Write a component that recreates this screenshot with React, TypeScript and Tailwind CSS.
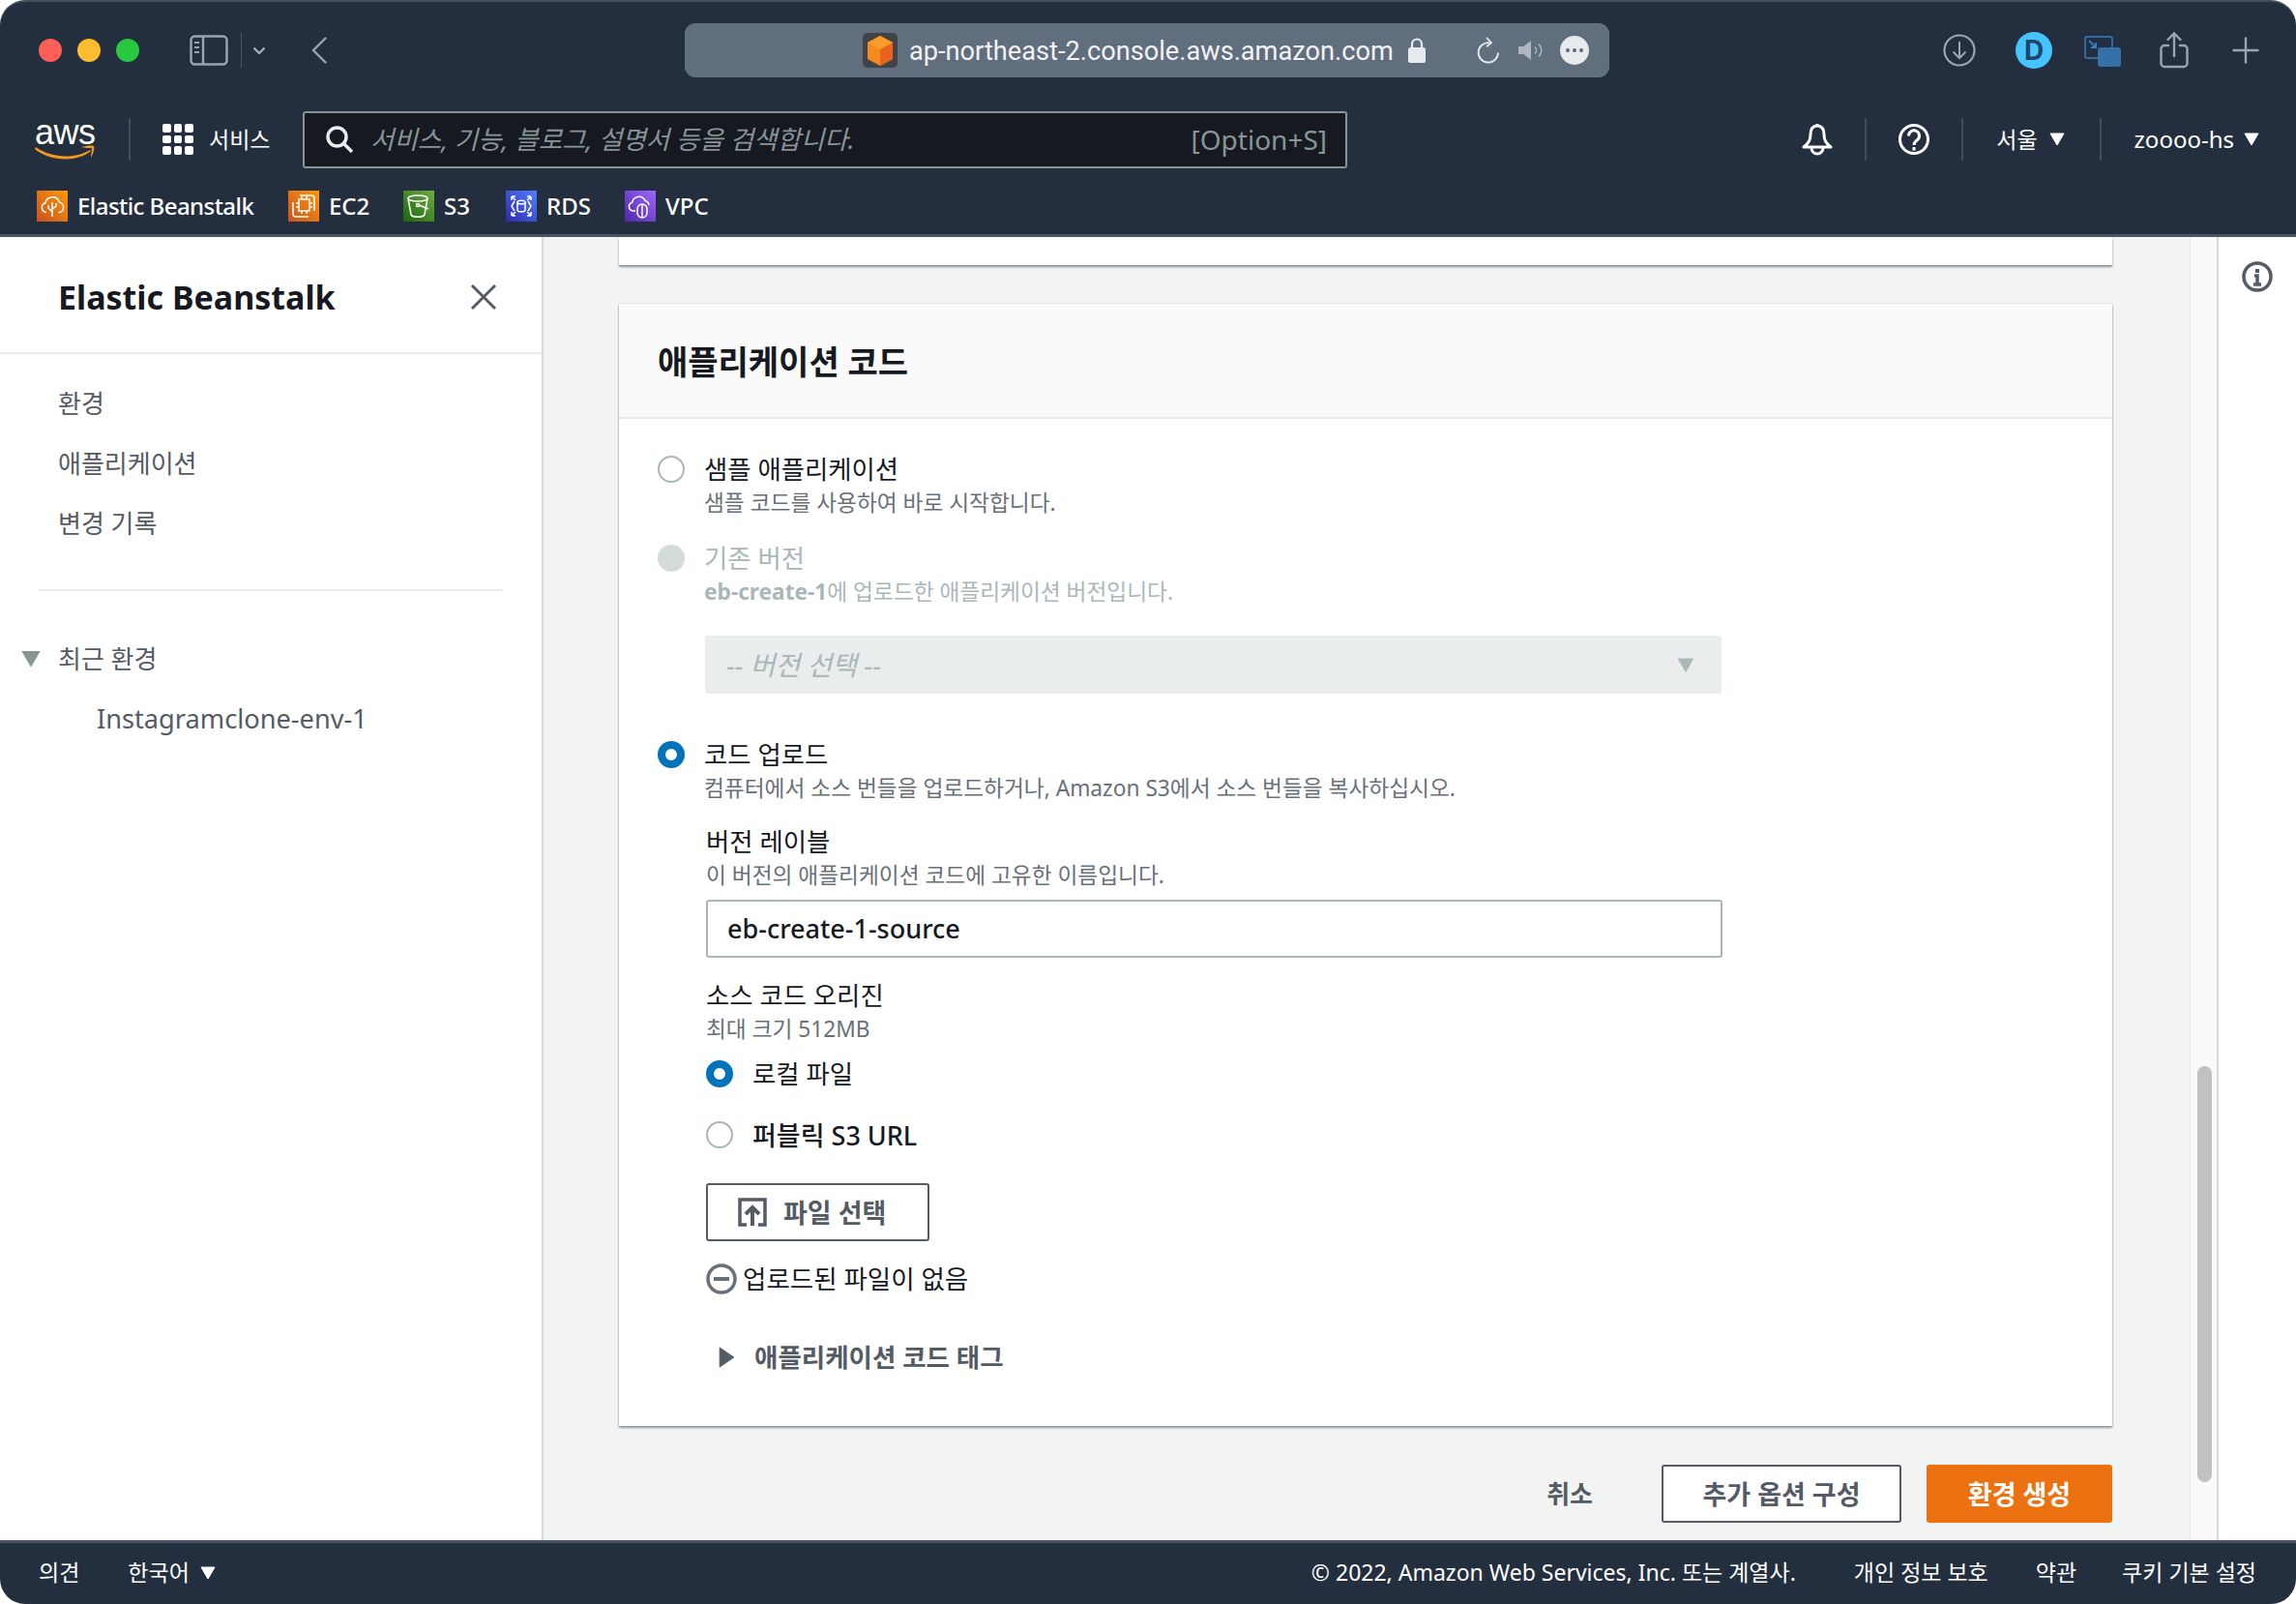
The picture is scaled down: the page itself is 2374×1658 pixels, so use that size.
import type { ReactNode } from 'react';

const FONT = 'font-["Noto_Sans","Noto_Sans_CJK_KR",sans-serif]';

function Divider() {
  return <div className="w-[2px] h-[44px] bg-[#414c5a] shrink-0" />;
}

function Tri({ className }: { className: string }) {
  return (
    <svg viewBox="0 0 16 14" className={className} fill="currentColor">
      <path d="M1 1h14L8 13z" strokeLinejoin="round" stroke="currentColor" />
    </svg>
  );
}

function Radio({ state }: { state: 'off' | 'on' | 'disabled' }) {
  if (state === 'on') {
    return <div className="w-[28px] h-[28px] rounded-full border-[8px] border-[#0073bb] bg-white shrink-0" />;
  }
  if (state === 'disabled') {
    return <div className="w-[28px] h-[28px] rounded-full bg-[#d5dbdb] shrink-0" />;
  }
  return <div className="w-[28px] h-[28px] rounded-full border-2 border-[#aab7b8] bg-white shrink-0" />;
}

function TrafficLights() {
  return (
    <div className="flex gap-[16px] items-center w-[144px] shrink-0">
      <div className="w-[24px] h-[24px] rounded-full bg-[#ff5f57]" />
      <div className="w-[24px] h-[24px] rounded-full bg-[#febc2e]" />
      <div className="w-[24px] h-[24px] rounded-full bg-[#28c840]" />
    </div>
  );
}

function TitleBar() {
  return (
    <div className="h-[106px] pl-[40px] pr-[38px] pt-[21px] flex items-start">
      <div className="h-[58px] flex items-center">
        <TrafficLights />
        <svg viewBox="0 0 40 32" className="w-[40px] h-[32px] ml-[12px] text-[#9aa5b4]" fill="none" stroke="currentColor" strokeWidth="2.4">
          <rect x="1.5" y="1.5" width="37" height="29" rx="4" />
          <path d="M14 2v28" />
          <path d="M5 8h5M5 13h5M5 18h5" strokeWidth="2" />
        </svg>
        <div className="w-[1px] h-[36px] bg-[#4a5565] ml-[13px]" />
        <svg viewBox="0 0 14 9" className="w-[14px] h-[9px] ml-[11px] text-[#a8b2bf]" fill="none" stroke="currentColor" strokeWidth="2.2">
          <path d="M1.5 1.5 7 7l5.5-5.500" />
        </svg>
        <svg viewBox="0 0 16 28" className="w-[16px] h-[28px] ml-[47px] text-[#9aa5b4]" fill="none" stroke="currentColor" strokeWidth="2.4" strokeLinecap="round">
          <path d="M14.5 1.5 2 14l12.5 12.5" />
        </svg>
      </div>
      <div className="ml-[370px] w-[956px] h-[56px] mt-[1px] rounded-[11px] bg-[#616e7e] flex items-center pl-[184px]">
        <svg viewBox="0 0 36 36" className="w-[36px] h-[36px] shrink-0">
          <rect width="36" height="36" rx="5" fill="#414346" />
          <path d="M18 3 31 10v17l-13 7-13-7V10z" fill="#f58a1f" />
          <path d="M18 17l13-7v17l-13 7z" fill="#e8641e" />
          <path d="M18 3 31 10l-13 7-13-7z" fill="#fb9b2a" />
        </svg>
        <span className="ml-[12px] w-[500px] pt-[3px] text-[27.200px] leading-none text-[#f1f3f5] font-['Roboto',sans-serif] whitespace-nowrap">
          ap-northeast-2.console.aws.amazon.com
        </span>
        <svg viewBox="0 0 20 28" className="w-[20px] h-[28px] ml-[15px] shrink-0">
          <path d="M5 12V7.5a5 5 0 0 1 10 0V12" fill="none" stroke="#e8eaed" strokeWidth="2.2" />
          <rect x="1" y="11" width="18" height="16" rx="2.5" fill="#e8eaed" />
        </svg>
        <svg viewBox="0 0 26 28" className="w-[26px] h-[28px] ml-[51px] shrink-0" fill="none" stroke="#e8eaed" strokeWidth="1.8">
          <path d="M14 6.2A10.2 10.2 0 1 0 23 16.400" />
          <path d="M11 1l5 5.200-5 4" />
        </svg>
        <svg viewBox="0 0 28 22" className="w-[28px] h-[22px] ml-[17px] shrink-0">
          <path d="M1 7h5l8-6v20l-8-6H1z" fill="#aeb6c0" />
          <path d="M18 7.500a5 5 0 0 1 0 7M22 4.500a9 9 0 0 1 0 13" fill="none" stroke="#aeb6c0" strokeWidth="1.6" />
        </svg>
        <div className="w-[30px] h-[30px] rounded-full bg-[#e8eaed] ml-[16px] flex items-center justify-center gap-[2.500px] shrink-0">
          <div className="w-[4.500px] h-[4.500px] rounded-full bg-[#5d6878]" />
          <div className="w-[4.500px] h-[4.500px] rounded-full bg-[#5d6878]" />
          <div className="w-[4.500px] h-[4.500px] rounded-full bg-[#5d6878]" />
        </div>
      </div>
      <div className="flex-1" />
      <div className="h-[58px] flex items-center">
        <svg viewBox="0 0 34 34" className="w-[34px] h-[34px] text-[#9aa5b4]" fill="none" stroke="currentColor" strokeWidth="2.200">
          <circle cx="17" cy="17" r="15.500" />
          <path d="M17 8v17M10.500 18.500 17 25l6.500-6.500" strokeWidth="2" />
        </svg>
        <div className="w-[38px] h-[38px] ml-[41px] rounded-full bg-[#45c4ff] flex items-center justify-center text-[28px] font-bold text-[#20456b] leading-none font-['Inter',sans-serif]">
          D
        </div>
        <svg viewBox="0 0 38 32" className="w-[38px] h-[32px] ml-[33px] mt-[2px]">
          <rect x="1" y="1" width="28" height="22" rx="2" fill="none" stroke="#2f6ba3" strokeWidth="2" />
          <path d="M5 5l7 7M12 7v5H7" fill="none" stroke="#3b7db9" strokeWidth="2" />
          <rect x="14" y="12" width="24" height="20" rx="3" fill="#3570a8" />
        </svg>
        <svg viewBox="0 0 30 38" className="w-[30px] h-[38px] ml-[40px] text-[#9aa5b4]" fill="none" stroke="currentColor" strokeWidth="2.400" strokeLinecap="round">
          <path d="M9 14H5a3.500 3.500 0 0 0-3.500 3.500v15A3.500 3.500 0 0 0 5 36h20a3.500 3.500 0 0 0 3.500-3.500v-15A3.500 3.500 0 0 0 25 14h-4" />
          <path d="M15 25V2M8.500 8 15 1.500 21.500 8" />
        </svg>
        <svg viewBox="0 0 28 28" className="w-[28px] h-[28px] ml-[45px] text-[#9aa5b4]" fill="none" stroke="currentColor" strokeWidth="2.400" strokeLinecap="round">
          <path d="M14 1.500v25M1.500 14h25" />
        </svg>
      </div>
    </div>
  );
}

function NavBar() {
  return (
    <div className="h-[72px] pl-[36px] pr-[38px] flex items-center">
      <div className="relative w-[62px] h-[44px] shrink-0">
        <span className={`block text-[36px] leading-[30px] text-white tracking-[-0.5px] font-["Liberation_Sans",sans-serif]`}>aws</span>
        <svg viewBox="0 0 62 16" className="absolute left-0 top-[28px] w-[62px] h-[16px]" fill="#f7981d">
          <path d="M1 2c15 11 40 13 56 3l1 1C44 18 15 17 0 4z" />
          <path d="M48 2c4-1 10-2 13-1 1 3-1 9-3 12 0-3 1-7 1-10-3 0-7 0-11-1z" />
        </svg>
      </div>
      <div className="ml-[35px]"><Divider /></div>
      <div className="ml-[33px] grid grid-cols-3 gap-[3px] w-[32px] h-[32px] shrink-0">
        {Array.from({ length: 9 }).map((_, i) => (
          <div key={i} className="bg-white rounded-[2px]" />
        ))}
      </div>
      <span className="ml-[16px] w-[62px] text-[23px] text-white whitespace-nowrap leading-none">서비스</span>
      <div className="ml-[35px] w-[1080px] h-[59px] bg-[#16191f] border-2 border-[#879596] rounded-[3px] flex items-center pl-[22px] pr-[19px]">
        <svg viewBox="0 0 28 28" className="w-[28px] h-[28px] shrink-0" fill="none" stroke="#eaeded" strokeWidth="3.400">
          <circle cx="11.500" cy="11.500" r="9.500" />
          <path d="M18.500 18.500 27 27" />
        </svg>
        <span className="ml-[18px] italic text-[26.500px] text-[#879596] whitespace-nowrap leading-none">
          서비스, 기능, 블로그, 설명서 등을 검색합니다.
        </span>
        <div className="flex-1" />
        <span className="text-[28px] text-[#879596] leading-none whitespace-nowrap">[Option+S]</span>
      </div>
      <div className="flex-1" />
      <svg viewBox="0 0 32 34" className="w-[32px] h-[34px] text-white shrink-0" fill="none" stroke="currentColor" strokeWidth="3" strokeLinejoin="round">
        <path d="M16 3c-5 0-7 4-7 9 0 6-2 9-7 13h28c-5-4-7-7-7-13 0-5-2-9-7-9zM16 1v2" />
        <path d="M10 26a6 6 0 0 0 12 0" />
      </svg>
      <div className="ml-[33px]"><Divider /></div>
      <svg viewBox="0 0 32 32" className="w-[32px] h-[32px] ml-[33px] shrink-0" fill="none" stroke="#fff" strokeWidth="3">
        <circle cx="16" cy="16" r="14.500" />
        <path d="M10.500 12.500a5.500 5.500 0 1 1 8.500 4.500c-2 1.500-3 2.500-3 5" />
        <path d="M16 24v3.500" />
      </svg>
      <div className="ml-[33px]"><Divider /></div>
      <span className="ml-[34px] text-[23px] text-white leading-none whitespace-nowrap">서울</span>
      <Tri className="ml-[12px] w-[16px] h-[14px] text-white shrink-0" />
      <div className="ml-[36px]"><Divider /></div>
      <span className="ml-[34px] text-[24px] text-white leading-none whitespace-nowrap">zoooo-hs</span>
      <Tri className="ml-[10px] w-[16px] h-[14px] text-white shrink-0" />
    </div>
  );
}

function Shortcut({ label, bg, children, className, labelClass }: { label: string; bg: string; children: ReactNode; className: string; labelClass?: string }) {
  return (
    <div className={`flex items-center ${className}`}>
      <div className={`w-[32px] h-[32px] shrink-0 ${bg}`}>
        <svg viewBox="0 0 32 32" className="w-[32px] h-[32px]" fill="none" stroke="#fff" strokeWidth="1.500">
          {children}
        </svg>
      </div>
      <span className={`ml-[10px] text-[24px] leading-none text-white font-medium whitespace-nowrap ${labelClass ?? ''}`}>{label}</span>
    </div>
  );
}

function Shortcuts() {
  return (
    <div className="h-[62px] pl-[38px] pt-[4px] flex items-center">
      <Shortcut label="Elastic Beanstalk" labelClass="tracking-[-0.55px]" bg="bg-linear-to-tr from-[#c8511b] to-[#ff9900]" className="w-[260px]">
        <path d="M10 22.500a5 5 0 0 1-1-9.800 7.500 7.500 0 0 1 14.500-.5 5.200 5.200 0 0 1-1 10.300" />
        <path d="M16 27V12M16 22l-4-4v-3M16 19l4-3v-3" />
      </Shortcut>
      <Shortcut label="EC2" bg="bg-linear-to-tr from-[#c8511b] to-[#ff9900]" className="w-[119px]">
        <rect x="11" y="9" width="11" height="12" />
        <path d="M12 5h12a3 3 0 0 1 3 3v13M21 27H8a3 3 0 0 1-3-3V12M14 6v3M19 6v3M14 21v3M19 21v3M8 13h3M8 17h3M22 13h3M22 17h3" />
      </Shortcut>
      <Shortcut label="S3" bg="bg-linear-to-tr from-[#1b660f] to-[#6cae3e]" className="w-[106px]">
        <ellipse cx="15" cy="8" rx="10" ry="3" />
        <path d="M5 8l3 17c2 3 12 3 14 0l3-17" />
        <circle cx="15" cy="15" r="1.500" />
        <path d="M16 15l10 4" />
      </Shortcut>
      <Shortcut label="RDS" bg="bg-linear-to-tr from-[#2e27ad] to-[#527fff]" className="w-[123px]">
        <ellipse cx="16" cy="12" rx="4" ry="1.800" />
        <path d="M12 12v8c0 2.400 8 2.400 8 0v-8M9 11l-3 5 3 5M23 11l3 5-3 5" />
        <path d="M6 6l4 4M6 6v4M6 6h4M26 6l-4 4M26 6v4M26 6h-4M6 26l4-4M6 26v-4M6 26h4M26 26l-4-4M26 26v-4M26 26h-4" />
      </Shortcut>
      <Shortcut label="VPC" bg="bg-linear-to-tr from-[#4d27a8] to-[#a166ff]" className="">
        <path d="M11 21H8.500a4.500 4.500 0 0 1-.8-8.800A7 7 0 0 1 21 10.500a5 5 0 0 1 4 4.500" />
        <rect x="13" y="14" width="10" height="14" rx="5" />
        <path d="M18 14v14" />
      </Shortcut>
    </div>
  );
}

function Sidebar() {
  return (
    <aside className="w-[562px] shrink-0 bg-white border-r-2 border-[#d5dbdb] flex flex-col">
      <div className="h-[121px] pl-[60px] pr-[46px] flex items-center justify-between border-b-2 border-[#eaeded] pt-[5px]">
        <span className="text-[34px] font-bold text-[#16191f] leading-none whitespace-nowrap">Elastic Beanstalk</span>
        <svg viewBox="0 0 28 28" className="w-[28px] h-[28px]" fill="none" stroke="#545b64" strokeWidth="3">
          <path d="M2 2l24 24M26 2 2 26" />
        </svg>
      </div>
      <nav className="flex flex-col gap-[26px] pl-[60px] pt-[33px] text-[26px] leading-[36px] text-[#545b64]">
        <span>환경</span>
        <span>애플리케이션</span>
        <span>변경 기록</span>
      </nav>
      <div className="h-[2px] bg-[#eaeded] ml-[40px] mr-[40px] mt-[50px]" />
      <div className="flex items-center pl-[22px] mt-[52px] text-[26px] leading-[36px] text-[#545b64]">
        <Tri className="w-[20px] h-[18px] text-[#879596]" />
        <span className="ml-[18px]">최근 환경</span>
      </div>
      <span className="pl-[100px] mt-[26px] text-[27.200px] leading-[36px] text-[#545b64]">Instagramclone-env-1</span>
    </aside>
  );
}

function Option({ state, title, muted, children }: { state: 'off' | 'on' | 'disabled'; title: string; muted?: boolean; children: ReactNode }) {
  return (
    <div className="flex">
      <div className="pt-[4px]"><Radio state={state} /></div>
      <div className="ml-[20px]">
        <div className={`text-[26.400px] leading-[36px] ${muted ? 'text-[#aab7b8]' : 'text-[#16191f]'}`}>{title}</div>
        <div className={`text-[22.700px] leading-[34px] ${muted ? 'text-[#aab7b8]' : 'text-[#687078]'} whitespace-nowrap`}>{children}</div>
      </div>
    </div>
  );
}

function FormCard() {
  return (
    <section className="mt-[40px] bg-white shadow-[0_2px_2px_rgba(0,28,36,0.4),0_0_1px_rgba(0,28,36,0.35)]">
      <div className="h-[119px] bg-[#fafafa] border-b-2 border-[#eaeded] pl-[40px] pt-[3px] flex items-center">
        <h2 className="text-[34px] font-bold text-[#16191f] leading-none">애플리케이션 코드</h2>
      </div>
      <div className="pl-[40px] pt-[34px] h-[1041px]">
        <Option state="off" title="샘플 애플리케이션">샘플 코드를 사용하여 바로 시작합니다.</Option>
        <div className="mt-[22px]">
          <Option state="disabled" title="기존 버전" muted>
            <b className="font-bold">eb-create-1</b>에 업로드한 애플리케이션 버전입니다.
          </Option>
        </div>
        <div className="ml-[49px] mt-[28px] w-[1051px] h-[60px] rounded-[3px] bg-[#eaeded] flex items-center justify-between pl-[22px] pr-[27px]">
          <span className="italic text-[28px] text-[#aab7b8] leading-none">-- 버전 선택 --</span>
          <Tri className="w-[20px] h-[15px] text-[#aab7b8]" />
        </div>
        <div className="mt-[45px]">
          <Option state="on" title="코드 업로드">컴퓨터에서 소스 번들을 업로드하거나, Amazon S3에서 소스 번들을 복사하십시오.</Option>
        </div>
        <div className="ml-[50px]">
          <div className="mt-[20px] text-[26.400px] leading-[36px] text-[#16191f]">버전 레이블</div>
          <div className="text-[22.700px] leading-[34px] text-[#687078]">이 버전의 애플리케이션 코드에 고유한 이름입니다.</div>
          <div className="mt-[8px] w-[1051px] h-[60px] border-2 border-[#aab7b8] rounded-[3px] flex items-center pl-[20px] text-[27px] text-[#16191f] font-medium">
            eb-create-1-source
          </div>
          <div className="mt-[21px] text-[26.400px] leading-[36px] text-[#16191f]">소스 코드 오리진</div>
          <div className="text-[22.700px] leading-[34px] text-[#687078]">최대 크기 512MB</div>
          <div className="mt-[11px] flex items-center h-[36px]">
            <Radio state="on" />
            <span className="ml-[20px] text-[26.400px] text-[#16191f] leading-none">로컬 파일</span>
          </div>
          <div className="mt-[27px] flex items-center h-[36px]">
            <Radio state="off" />
            <span className="ml-[20px] text-[27px] text-[#16191f] leading-none font-medium">퍼블릭 S3 URL</span>
          </div>
          <div className="mt-[32px] w-[231px] h-[60px] border-2 border-[#545b64] rounded-[3px] flex items-center pl-[31px]">
            <svg viewBox="0 0 30 30" className="w-[30px] h-[30px] shrink-0" fill="none" stroke="#545b64" strokeWidth="4">
              <path d="M9 2H2v26h7M21 2h-1M21 2h7v26h-7M2 2h26" strokeWidth="3.500" />
              <path d="M15 29V11M8 17l7-7 7 7" />
            </svg>
            <span className="ml-[17px] text-[27px] font-bold text-[#545b64] leading-none whitespace-nowrap">파일 선택</span>
          </div>
          <div className="mt-[21px] flex items-center h-[36px]">
            <svg viewBox="0 0 32 32" className="w-[32px] h-[32px] shrink-0" fill="none" stroke="#687078" strokeWidth="3.500">
              <circle cx="16" cy="16" r="14" />
              <path d="M8 16h16" strokeWidth="4" />
            </svg>
            <span className="ml-[6px] text-[26.500px] text-[#16191f] leading-none whitespace-nowrap">업로드된 파일이 없음</span>
          </div>
          <div className="mt-[45px] flex items-center h-[36px] pl-[13px]">
            <svg viewBox="0 0 18 24" className="w-[17px] h-[22px] shrink-0" fill="#545b64">
              <path d="M1 1l16 11L1 23z" stroke="#545b64" strokeLinejoin="round" />
            </svg>
            <span className="ml-[20px] text-[26.500px] font-bold text-[#545b64] leading-none whitespace-nowrap">애플리케이션 코드 태그</span>
          </div>
        </div>
      </div>
    </section>
  );
}

function Main() {
  return (
    <main className="flex-1 bg-[#f2f3f3] pl-[78px] pr-[80px]">
      <div className="h-[29px] bg-white shadow-[0_2px_2px_rgba(0,28,36,0.45)]" />
      <FormCard />
      <div className="mt-[40px] flex items-center justify-end">
        <span className="text-[26px] font-bold text-[#545b64] leading-none">취소</span>
        <div className="ml-[71px] w-[248px] h-[60px] bg-white border-2 border-[#545b64] rounded-[3px] flex items-center justify-center text-[27px] font-bold text-[#545b64] leading-none whitespace-nowrap">
          추가 옵션 구성
        </div>
        <div className="ml-[26px] w-[192px] h-[60px] bg-[#ec7211] rounded-[3px] flex items-center justify-center text-[27px] font-bold text-white leading-none whitespace-nowrap">
          환경 생성
        </div>
      </div>
    </main>
  );
}

function Scrollbar() {
  return (
    <div className="w-[28px] shrink-0 bg-[#fafafa] border-l border-[#e8e8e8] pl-[7px] pt-[857px]">
      <div className="w-[15px] h-[430px] rounded-full bg-[#c1c1c1]" />
    </div>
  );
}

function InfoPanel() {
  return (
    <div className="w-[82px] shrink-0 bg-white border-l-2 border-[#d5dbdb] pt-[25px] flex justify-center">
      <svg viewBox="0 0 32 32" className="w-[32px] h-[32px]" fill="none" stroke="#545b64" strokeWidth="3.500">
        <circle cx="16" cy="16" r="14" />
        <path d="M16 8v4" strokeWidth="4" />
        <path d="M13 15h3v9M12 24h8" strokeWidth="3.500" />
      </svg>
    </div>
  );
}

function Footer() {
  return (
    <footer className="h-[66px] bg-[#232f3e] border-t-[3px] border-[#4a5462] rounded-b-[26px] pl-[40px] pr-[41px] pb-[2px] flex items-center text-[23px] text-white leading-none whitespace-nowrap">
      <span>의견</span>
      <span className="ml-[50px]">한국어</span>
      <Tri className="ml-[11px] w-[16px] h-[14px] text-white" />
      <div className="flex-1" />
      <span>© 2022, Amazon Web Services, Inc. 또는 계열사.</span>
      <span className="ml-[60px]">개인 정보 보호</span>
      <span className="ml-[49px]">약관</span>
      <span className="ml-[47px]">쿠키 기본 설정</span>
    </footer>
  );
}

export default function App() {
  return (
    <div className={`w-[2374px] h-[1658px] bg-white overflow-hidden flex flex-col ${FONT}`}>
      <header className="h-[245px] shrink-0 bg-[#232f3e] border-t-2 border-[#454f5c] border-b-[3px] border-b-[#4a5462] rounded-t-[26px]">
        <TitleBar />
        <NavBar />
        <Shortcuts />
      </header>
      <div className="flex-1 flex min-h-0">
        <Sidebar />
        <Main />
        <Scrollbar />
        <InfoPanel />
      </div>
      <Footer />
    </div>
  );
}
